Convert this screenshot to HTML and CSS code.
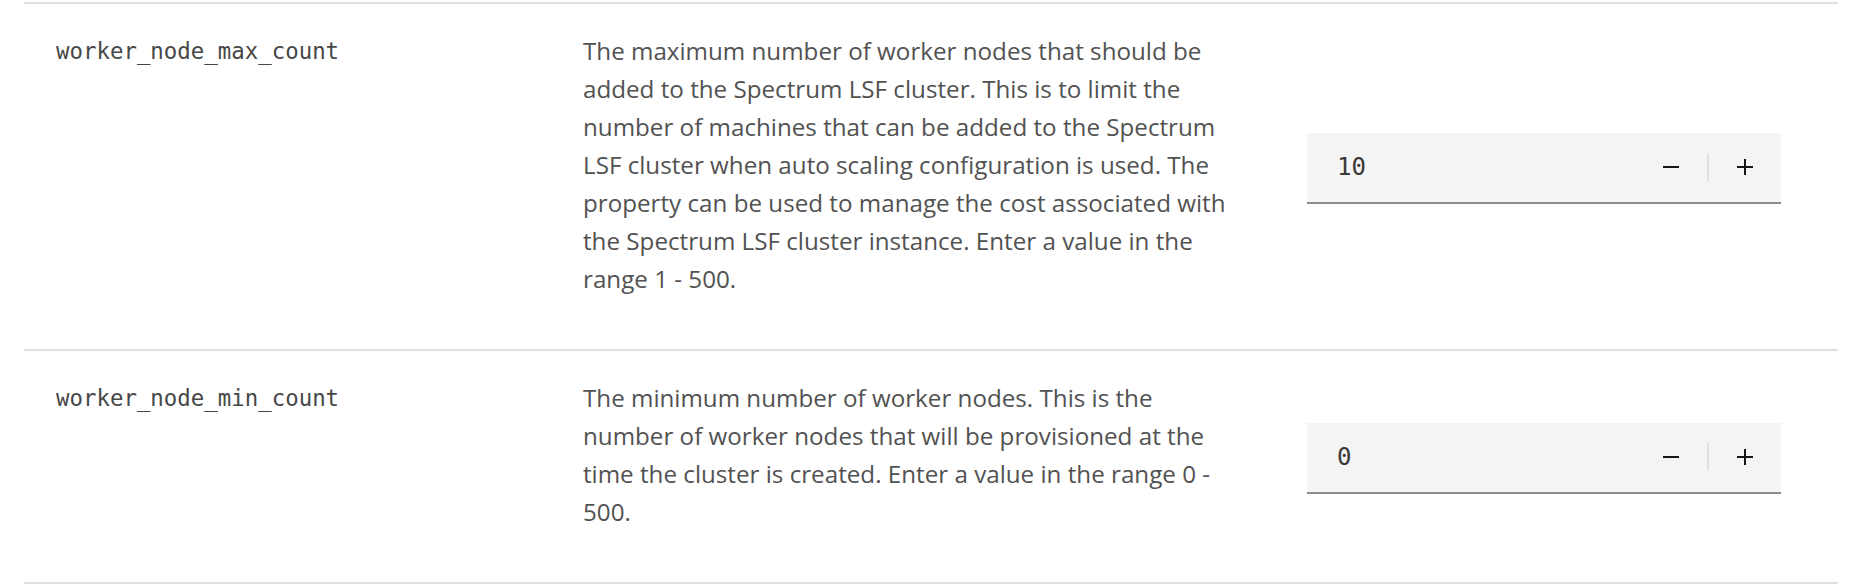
FILE: index.html
```html
<!DOCTYPE html>
<html lang="en">
<head>
<meta charset="utf-8">
<title>Worker node settings</title>
<link rel="stylesheet" href="styles.css">
</head>
<body>
<div class="table">
  <div class="row">
    <div class="name">worker_node_max_count</div>
    <div class="desc">The maximum number of worker nodes that should be added to the Spectrum LSF cluster. This is to limit the number of machines that can be added to the Spectrum LSF cluster when auto scaling configuration is used. The property can be used to manage the cost associated with the Spectrum LSF cluster instance. Enter a value in the range 1 - 500.</div>
    <div class="field">
      <div class="number">
        <span class="value">10</span>
        <div class="controls">
          <button class="step" aria-label="Decrement">
            <svg width="16" height="16" viewBox="0 0 16 16"><rect x="0" y="7" width="16" height="2" fill="#161616"/></svg>
          </button>
          <span class="divider"></span>
          <button class="step" aria-label="Increment">
            <svg width="16" height="16" viewBox="0 0 16 16"><rect x="0" y="7" width="16" height="2" fill="#161616"/><rect x="7" y="0" width="2" height="16" fill="#161616"/></svg>
          </button>
        </div>
      </div>
    </div>
  </div>
  <div class="row">
    <div class="name">worker_node_min_count</div>
    <div class="desc">The minimum number of worker nodes. This is the number of worker nodes that will be provisioned at the time the cluster is created. Enter a value in the range 0 - 500.</div>
    <div class="field">
      <div class="number">
        <span class="value">0</span>
        <div class="controls">
          <button class="step" aria-label="Decrement">
            <svg width="16" height="16" viewBox="0 0 16 16"><rect x="0" y="7" width="16" height="2" fill="#161616"/></svg>
          </button>
          <span class="divider"></span>
          <button class="step" aria-label="Increment">
            <svg width="16" height="16" viewBox="0 0 16 16"><rect x="0" y="7" width="16" height="2" fill="#161616"/><rect x="7" y="0" width="2" height="16" fill="#161616"/></svg>
          </button>
        </div>
      </div>
    </div>
  </div>
</div>
</body>
</html>
```

FILE: styles.css
```css
html, body {
  margin: 0;
  padding: 0;
  background: #ffffff;
}

.table {
  padding: 2px 24px 0 24px;
  font-family: "Open Sans", Roboto, sans-serif;
}

.row {
  display: grid;
  grid-template-columns: 527px 724px 474px;
  padding: 28px 56px 51px 32px;
  border-top: 2px solid #e0e0e0;
  align-items: start;
}

.row:last-child {
  border-bottom: 2px solid #e0e0e0;
}

.name {
  font-family: "DejaVu Sans Mono", "Liberation Mono", monospace;
  font-size: 22.4px;
  line-height: 38px;
  color: #474747;
}

.desc {
  max-width: 647px;
  font-size: 24.2px;
  line-height: 38px;
  color: #525252;
}

.field {
  align-self: center;
  position: relative;
  top: 3px;
}

.number {
  display: flex;
  align-items: center;
  height: 69px;
  background: #f4f4f4;
  border-bottom: 2px solid #8d8d8d;
}

.value {
  flex: 1;
  padding-left: 30px;
  font-family: "DejaVu Sans Mono", "Liberation Mono", monospace;
  font-size: 24px;
  color: #393939;
}

.controls {
  display: flex;
  align-items: center;
  height: 100%;
}

.step {
  display: flex;
  align-items: center;
  justify-content: center;
  width: 72px;
  height: 100%;
  padding: 0;
  border: 0;
  background: transparent;
}

.divider {
  width: 2px;
  height: 28px;
  background: #e0e0e0;
}
```
